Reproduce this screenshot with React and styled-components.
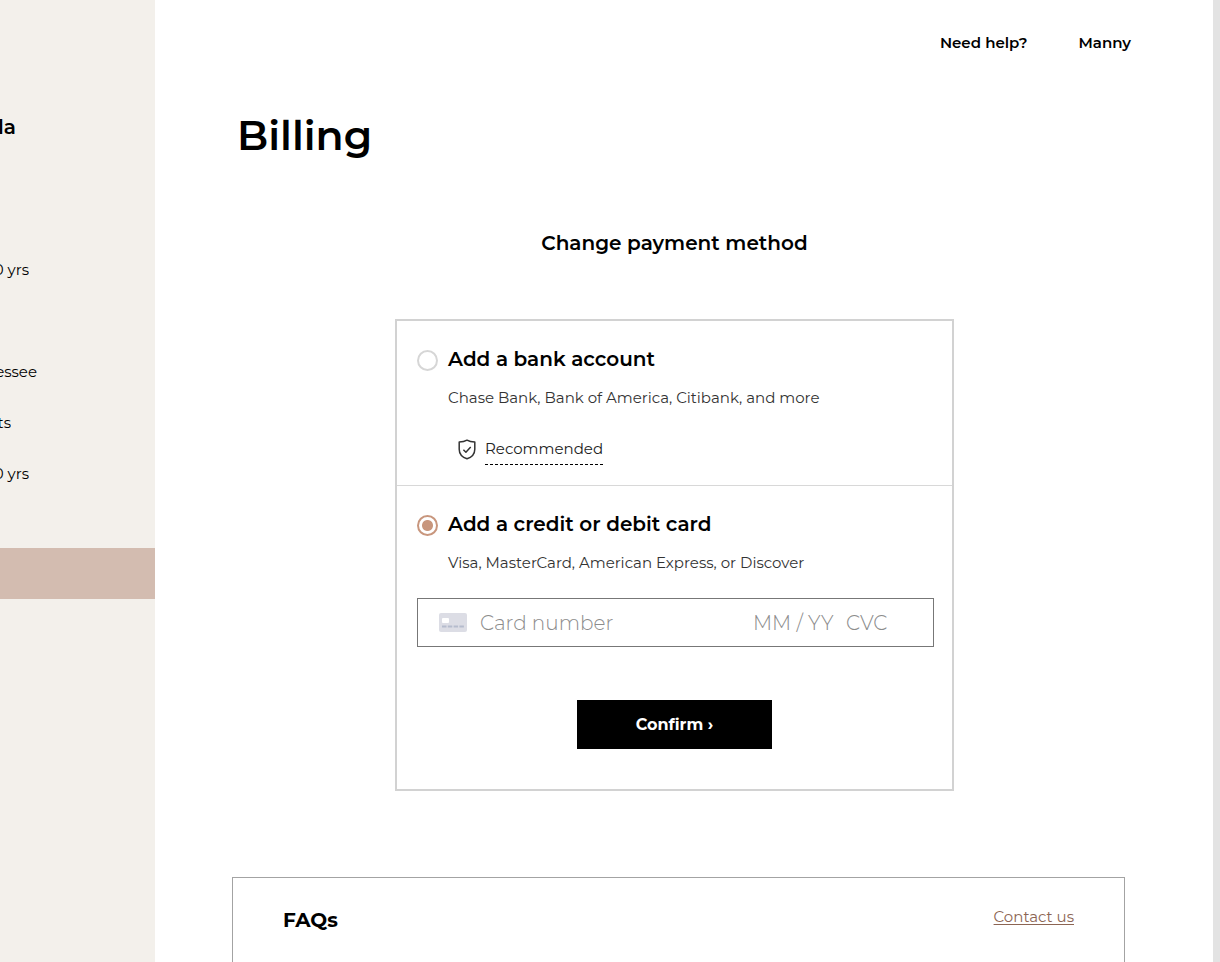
import React, { useState } from "react";
import styled, { createGlobalStyle } from "styled-components";

const GlobalStyle = createGlobalStyle`
  *, *::before, *::after { box-sizing: border-box; }
  html, body { margin: 0; padding: 0; background: #fff; }
  body, button, input {
    font-family: Montserrat, Inter, "Open Sans", sans-serif;
    color: #000;
  }
  h1, h2, h3, p, ul, fieldset { margin: 0; padding: 0; border: 0; min-width: 0; }
`;

const Page = styled.div`
  display: flex;
  height: 100vh;
  overflow: hidden;
`;

const Sidebar = styled.aside`
  flex: 0 0 155px;
  overflow: hidden;
  background: #f3f0eb;
  padding-top: 111px;
`;

const Clipped = styled.span`
  display: flex;
  justify-content: flex-end;
  overflow: hidden;
  white-space: nowrap;
  width: ${(p) => p.$width}px;
`;

const PlaceName = styled.h3`
  font-size: 20px;
  line-height: 32px;
  font-weight: 600;
  margin-bottom: 101px;
`;

const Facts = styled.ul`
  list-style: none;
  margin-bottom: 49px;
`;

const Fact = styled.li`
  height: 51px;
  font-size: 15px;
  line-height: 51px;
`;

const ActiveEntry = styled.div`
  height: 51px;
  background: #d3bcb0;
`;

const Main = styled.main`
  flex: 1;
  min-width: 0;
  display: flex;
  flex-direction: column;
  padding: 0 88px 0 77px;
`;

const TopNav = styled.nav`
  display: flex;
  justify-content: flex-end;
  gap: 51px;
  padding: 31px 0 0;
  margin-right: -6px;
`;

const NavLink = styled.a`
  color: #000;
  font-size: 15px;
  line-height: 24px;
  font-weight: 600;
  text-decoration: none;
`;

const Title = styled.h1`
  margin: 54px 0 0 5px;
  font-size: 41px;
  line-height: 52px;
  font-weight: 600;
`;

const Method = styled.section`
  display: flex;
  flex-direction: column;
  align-items: center;
  padding: 66px 8px 0 0;
`;

const MethodTitle = styled.h2`
  font-size: 20px;
  line-height: 32px;
  font-weight: 600;
  margin-bottom: 60px;
`;

const Card = styled.form`
  width: 100%;
  max-width: 559px;
  border: 2px solid #d2d2d2;
`;

const Option = styled.div`
  padding: 22px 18px 20px 20px;
  border-bottom: ${(p) => (p.$divided ? "1px solid #d8d8d8" : "0")};
`;

const OptionLabel = styled.label`
  display: flex;
  align-items: center;
  gap: 10px;
  font-size: 20px;
  line-height: 32px;
  font-weight: 600;
`;

const Radio = styled.input`
  appearance: none;
  flex: none;
  width: 21px;
  height: 21px;
  margin: 2px 0 0;
  border: 2px solid #d6d6d6;
  border-radius: 50%;
  &:checked {
    border-color: #c8967d;
    background: radial-gradient(circle, #c8967d 5px, transparent 6px);
  }
`;

const Hint = styled.p`
  margin: 11px 0 0 31px;
  font-size: 15px;
  line-height: 24px;
  color: #333;
`;

const Badge = styled.div`
  display: flex;
  align-items: flex-start;
  gap: 9px;
  margin: 25px 0 0 41px;
`;

const BadgeText = styled.span`
  padding: 1px 0 2px;
  border-bottom: 1px dashed #000;
  font-size: 15px;
  line-height: 26px;
  color: #222;
`;

const ShieldIcon = styled.svg`
  width: 18px;
  height: 21px;
  margin-top: 4px;
`;

const Field = styled.div`
  display: flex;
  align-items: center;
  height: 49px;
  margin-top: 23px;
  padding: 0 20px 0 21px;
  border: 1px solid #777;
`;

const CardIcon = styled.svg`
  flex: none;
  width: 28px;
  height: 19px;
  margin-right: 13px;
`;

const FieldInput = styled.input`
  flex: ${(p) => (p.$width ? `0 0 ${p.$width}px` : "1")};
  min-width: 0;
  width: ${(p) => (p.$width ? `${p.$width}px` : "auto")};
  height: 32px;
  padding: 0;
  border: 0;
  outline: 0;
  background: transparent;
  font-size: 20px;
  font-weight: 300;
  &::placeholder { color: #8c8c8c; opacity: 1; }
`;

const Confirm = styled.button`
  display: block;
  width: 195px;
  height: 49px;
  margin: 33px auto 40px;
  padding: 0;
  border: 0;
  background: #000;
  color: #fff;
  font-size: 16px;
  font-weight: 700;
`;

const Faqs = styled.section`
  flex: 1;
  display: flex;
  justify-content: space-between;
  align-items: flex-start;
  margin-top: 86px;
  padding: 26px 50px;
  border: 1px solid #a3a3a3;
  border-bottom: 0;
`;

const FaqTitle = styled.h2`
  font-size: 20px;
  line-height: 32px;
  font-weight: 700;
`;

const Contact = styled.a`
  color: #8c6553;
  font-size: 15px;
  line-height: 26px;
  text-decoration-skip-ink: none;
  text-underline-offset: 2px;
`;

const ScrollTrack = styled.div`
  flex: 0 0 7px;
  background: #e3e3e3;
`;

const facts = [
  { text: "0 yrs", width: 29 },
  null,
  { text: "essee", width: 37 },
  { text: "ts", width: 11 },
  { text: "0 yrs", width: 29 },
];

export default function App() {
  const [method, setMethod] = useState("card");
  return (
    <>
      <GlobalStyle />
      <Page>
        <Sidebar>
          <PlaceName><Clipped $width={16}>la</Clipped></PlaceName>
          <Facts>
            {facts.map((f, i) => (
              <Fact key={i}>{f && <Clipped $width={f.width}>{f.text}</Clipped>}</Fact>
            ))}
          </Facts>
          <ActiveEntry />
        </Sidebar>
        <Main>
          <TopNav>
            <NavLink href="#help">Need help?</NavLink>
            <NavLink href="#account">Manny</NavLink>
          </TopNav>
          <Title>Billing</Title>
          <Method>
            <MethodTitle>Change payment method</MethodTitle>
            <Card onSubmit={(e) => e.preventDefault()}>
              <Option $divided>
                <OptionLabel>
                  <Radio type="radio" name="method" checked={method === "bank"} onChange={() => setMethod("bank")} />
                  Add a bank account
                </OptionLabel>
                <Hint>Chase Bank, Bank of America, Citibank, and more</Hint>
                <Badge>
                  <ShieldIcon viewBox="0 0 18 21" fill="none" stroke="#333" strokeWidth="1.5" strokeLinejoin="round" aria-hidden="true">
                    <path d="M9 1.2C6.8 2.5 4 3 1.2 3v7.2c0 4.6 3.2 8 7.8 9.6 4.6-1.6 7.8-5 7.8-9.6V3C14 3 11.2 2.5 9 1.2Z" />
                    <path d="m5.4 10.8 2.5 2.4 4.8-5.1" />
                  </ShieldIcon>
                  <BadgeText>Recommended</BadgeText>
                </Badge>
              </Option>
              <Option>
                <OptionLabel>
                  <Radio type="radio" name="method" checked={method === "card"} onChange={() => setMethod("card")} />
                  Add a credit or debit card
                </OptionLabel>
                <Hint>Visa, MasterCard, American Express, or Discover</Hint>
                <Field>
                  <CardIcon viewBox="0 0 28 19" aria-hidden="true">
                    <rect width="28" height="19" rx="2" fill="#dcdde5" />
                    <rect x="3" y="5" width="7" height="5" rx="1" fill="#fff" />
                    <path d="M3 13.5h22" stroke="#b5bccd" strokeWidth="2" strokeDasharray="4.5 1.3" />
                  </CardIcon>
                  <FieldInput aria-label="Card number" placeholder="Card number" />
                  <FieldInput aria-label="Expiry date" placeholder="MM / YY" $width={93} />
                  <FieldInput aria-label="CVC" placeholder="CVC" $width={67} />
                </Field>
              </Option>
              <Confirm type="submit">Confirm ›</Confirm>
            </Card>
          </Method>
          <Faqs>
            <FaqTitle>FAQs</FaqTitle>
            <Contact href="#contact">Contact us</Contact>
          </Faqs>
        </Main>
        <ScrollTrack />
      </Page>
    </>
  );
}
